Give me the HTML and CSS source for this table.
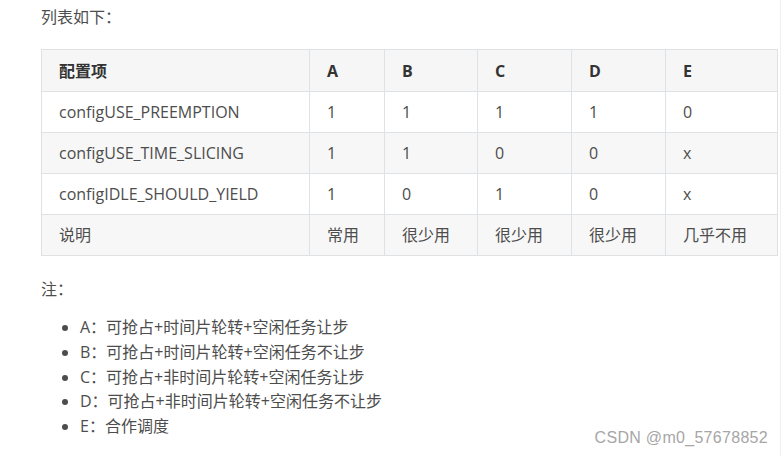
FILE: index.html
```html
<!DOCTYPE html>
<html lang="zh-CN">
<head>
<meta charset="utf-8">
<title>列表</title>
<link rel="stylesheet" href="styles.css">
</head>
<body>
<div class="page">
  <p class="intro">列表如下：</p>
  <table class="cfg">
    <colgroup>
      <col class="c-name"><col class="c-a"><col class="c-b"><col class="c-c"><col class="c-d"><col class="c-e">
    </colgroup>
    <thead>
      <tr><th>配置项</th><th>A</th><th>B</th><th>C</th><th>D</th><th>E</th></tr>
    </thead>
    <tbody>
      <tr><td>configUSE_PREEMPTION</td><td>1</td><td>1</td><td>1</td><td>1</td><td>0</td></tr>
      <tr><td>configUSE_TIME_SLICING</td><td>1</td><td>1</td><td>0</td><td>0</td><td>x</td></tr>
      <tr><td>configIDLE_SHOULD_YIELD</td><td>1</td><td>0</td><td>1</td><td>0</td><td>x</td></tr>
      <tr><td>说明</td><td>常用</td><td>很少用</td><td>很少用</td><td>很少用</td><td>几乎不用</td></tr>
    </tbody>
  </table>
  <p class="note">注：</p>
  <ul class="list">
    <li>A：可抢占+时间片轮转+空闲任务让步</li>
    <li>B：可抢占+时间片轮转+空闲任务不让步</li>
    <li>C：可抢占+非时间片轮转+空闲任务让步</li>
    <li>D：可抢占+非时间片轮转+空闲任务不让步</li>
    <li>E：合作调度</li>
  </ul>
  <div class="watermark">CSDN @m0_57678852</div>
</div>
</body>
</html>
```

FILE: styles.css
```css
html, body {
  margin: 0;
  padding: 0;
  background: #ffffff;
}
.page {
  position: relative;
  box-sizing: border-box;
  width: 781px;
  height: 456px;
  padding-left: 41px;
  border-right: 1px solid #f0f0f0;
  font-family: "Open Sans", "Noto Sans CJK SC", sans-serif;
  font-size: 16px;
  line-height: 24.75px;
  color: #4d4d4d;
  overflow: hidden;
}
.intro {
  margin: 5px 0 0 0;
}
.cfg {
  margin-top: 19px;
  border-collapse: collapse;
  table-layout: fixed;
  width: 736px;
}
.c-name { width: 268px; }
.c-a { width: 75px; }
.c-b { width: 93px; }
.c-c { width: 94px; }
.c-d { width: 94px; }
.c-e { width: 112px; }
.cfg th, .cfg td {
  border: 1px solid #dfe2e5;
  padding: 8px 17px;
  text-align: left;
  line-height: 24px;
  white-space: nowrap;
}
.cfg th {
  background: #f6f6f6;
  font-weight: 700;
  color: #333333;
  padding-top: 9px;
}
.cfg tbody tr:nth-child(even) td {
  background: #f7f7f7;
}
.note {
  margin: 21.6px 0 0 0;
}
.list {
  margin: 13px 0 0 0;
  padding-left: 39px;
}
.list li {
  line-height: 24.75px;
}
.watermark {
  position: absolute;
  right: 12px;
  top: 428px;
  font-family: "Liberation Sans", Arial, sans-serif;
  font-size: 16px;
  line-height: 20px;
  color: #a6a6a6;
  letter-spacing: 0.3px;
}
```
